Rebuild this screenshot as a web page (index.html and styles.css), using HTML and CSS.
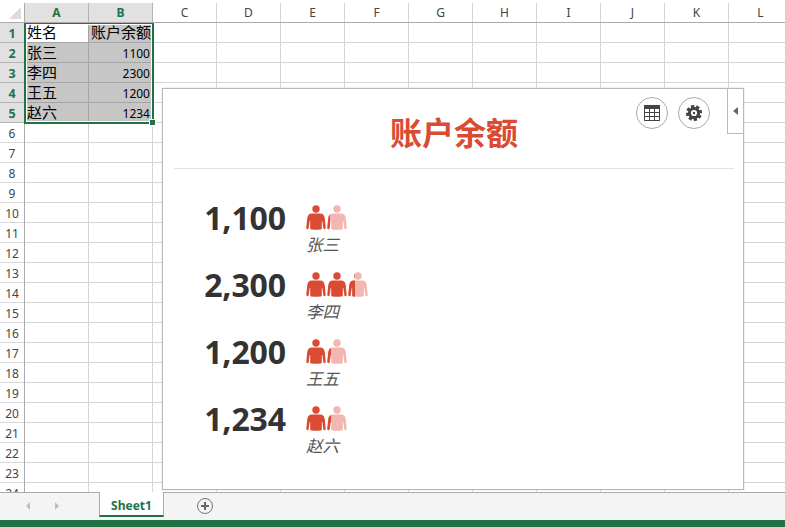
FILE: index.html
```
<!DOCTYPE html>
<html lang="zh-CN">
<head>
<meta charset="utf-8">
<title>Sheet1</title>
<link rel="stylesheet" href="styles.css">
</head>
<body>
<svg class="defs" width="0" height="0" aria-hidden="true">
  <symbol id="person" viewBox="0 0 20 25">
    <circle cx="10" cy="4" r="3.7"/>
    <path d="M6 8.600h8c3.200 0 4.300 1.700 4.800 4.800l.9 9.200c.1 1-.4 1.600-1.100 1.600s-1.200-.4-1.300-1.200l-1-6.900h-.5v7.100c0 .8-.5 1.200-1.500 1.300-2.800.4-5.800.4-8.600 0-1-.1-1.500-.5-1.500-1.300v-7.100h-.5l-1 6.900c-.1.8-.6 1.200-1.300 1.200s-1.200-.6-1.100-1.600l.9-9.200c.5-3.100 1.600-4.800 4.800-4.800z"/>
  </symbol>
</svg>
<div class="app">
  <header class="columns">
    <div class="corner"><svg width="12" height="12"><path d="M12 0v12H0z"/></svg></div>
    <div class="col on">A</div><div class="col on">B</div><div class="col">C</div><div class="col">D</div><div class="col">E</div><div class="col">F</div><div class="col">G</div><div class="col">H</div><div class="col">I</div><div class="col">J</div><div class="col">K</div><div class="col">L</div>
  </header>
  <main class="body">
    <div class="rows">
      <div class="row on">1</div><div class="row on">2</div><div class="row on">3</div><div class="row on">4</div><div class="row on">5</div><div class="row">6</div><div class="row">7</div><div class="row">8</div><div class="row">9</div><div class="row">10</div><div class="row">11</div><div class="row">12</div><div class="row">13</div><div class="row">14</div><div class="row">15</div><div class="row">16</div><div class="row">17</div><div class="row">18</div><div class="row">19</div><div class="row">20</div><div class="row">21</div><div class="row">22</div><div class="row">23</div><div class="row">24</div>
    </div>
    <div class="cells">
      <div class="data">
        <div class="cell active">姓名</div><div class="cell">账户余额</div>
        <div class="cell">张三</div><div class="cell num">1100</div>
        <div class="cell">李四</div><div class="cell num">2300</div>
        <div class="cell">王五</div><div class="cell num">1200</div>
        <div class="cell">赵六</div><div class="cell num">1234</div>
      </div>
      <div class="selection"><i class="handle"></i></div>
    </div>
    <section class="card">
      <h1 class="title">账户余额</h1>
      <div class="tools">
        <span class="tool"><svg width="16" height="16" viewBox="0 0 16 16"><path fill="#444" d="M0 0h16v16H0z"/><path fill="#fff" d="M1 4h4v3H1zM6 4h4v3H6zM11 4h4v3h-4zM1 8h4v3H1zM6 8h4v3H6zM11 8h4v3h-4zM1 12h4v3H1zM6 12h4v3H6zM11 12h4v3h-4z"/></svg></span>
        <span class="tool"><svg width="16" height="16" viewBox="-8 -8 16 16"><g fill="#444"><circle r="6"/><path d="M-1.700-8h3.400v16h-3.400z" transform="rotate(-12)"/><path d="M-1.700-8h3.400v16h-3.400z" transform="rotate(33)"/><path d="M-1.700-8h3.400v16h-3.400z" transform="rotate(78)"/><path d="M-1.700-8h3.400v16h-3.400z" transform="rotate(123)"/></g><circle r="3.100" fill="#fff"/><circle r="1.200" fill="#444"/></svg></span>
      </div>
      <div class="collapse"><svg width="5" height="8"><path d="M5 0v8L0 4z" fill="#666"/></svg></div>
      <div class="list">
        <div class="item"><div class="value">1,100</div><div class="info">
          <div class="people"><svg><use href="#person"/></svg><svg class="pale"><use href="#person"/></svg><span class="part p11"><svg><use href="#person"/></svg></span></div><div class="name">张三</div></div></div>
        <div class="item"><div class="value">2,300</div><div class="info">
          <div class="people"><svg><use href="#person"/></svg><svg><use href="#person"/></svg><svg class="pale"><use href="#person"/></svg><span class="part p23"><svg><use href="#person"/></svg></span></div><div class="name">李四</div></div></div>
        <div class="item"><div class="value">1,200</div><div class="info">
          <div class="people"><svg><use href="#person"/></svg><svg class="pale"><use href="#person"/></svg><span class="part p12"><svg><use href="#person"/></svg></span></div><div class="name">王五</div></div></div>
        <div class="item"><div class="value">1,234</div><div class="info">
          <div class="people"><svg><use href="#person"/></svg><svg class="pale"><use href="#person"/></svg><span class="part p12"><svg><use href="#person"/></svg></span></div><div class="name">赵六</div></div></div>
      </div>
    </section>
  </main>
  <nav class="tabs">
    <svg class="arrows" width="34" height="8"><path d="M4 0v8L0 4zM29 0v8l4-4z" fill="#bdbdbd"/></svg>
    <div class="tab">Sheet1</div>
    <svg class="add" width="18" height="18" viewBox="0 0 18 18"><circle cx="9" cy="9" r="7.500" fill="none" stroke="#777"/><path d="M9 5v8M5 9h8" stroke="#666" stroke-width="2"/></svg>
  </nav>
  <footer class="status"></footer>
</div>
</body>
</html>
```
FILE: styles.css
```
* { box-sizing: border-box; }
body { margin: 0; background: #fff; color: #444; font: 12px "Noto Sans", "Noto Sans CJK SC", sans-serif; }
.defs { position: absolute; }
.app { width: 785px; height: 527px; display: flex; flex-direction: column; overflow: hidden; }
.columns { height: 23px; flex: none; padding-top: 3px; display: flex; border-bottom: 1px solid #ababab; }
.corner { width: 25px; flex: none; border-right: 1px solid #ababab; display: flex; justify-content: flex-end; padding: 4px 3px 0 0; }
.corner svg { fill: #dcdcdc; }
.col { width: 64px; flex: none; border-right: 1px solid #d4d4d4; text-align: center; line-height: 19px; }
.col.on, .row.on { background: #e1e1e1; color: #217346; font-weight: 700; border-color: #b4b4b4; }
.body { position: relative; height: 469px; flex: none; overflow: hidden; display: flex; }
.rows { width: 25px; flex: none; border-right: 1px solid #ababab; }
.row { height: 20px; line-height: 22px; border-bottom: 1px solid #d9d9d9; text-align: center; }
.row.on { font-size: 12.5px; line-height: 21px; }
.cells {
  position: relative; flex: 1;
  background:
    repeating-linear-gradient(to right, transparent 0 63px, #d4d4d4 63px 64px),
    repeating-linear-gradient(to bottom, transparent 0 19px, #d4d4d4 19px 20px);
}
.data { width: 128px; display: grid; grid-template-columns: 64px 64px; grid-auto-rows: 20px; }
.cell { background: #c6c6c6; border-right: 1px solid #a5a5a5; border-bottom: 1px solid #a5a5a5; color: #000; font: 15px/18px "Noto Sans CJK SC", sans-serif; padding-left: 2px; white-space: nowrap; }
.cell.active { background: #fff; }
.cell.num { font: 12px/21px "Noto Sans", sans-serif; text-align: right; padding-right: 2px; }
.selection { position: absolute; left: -1px; top: -1px; width: 130px; height: 102px; border: 2px solid #217346; box-shadow: inset 0 0 0 1px #fff; }
.handle { position: absolute; right: -4px; bottom: -4px; width: 7px; height: 7px; background: #217346; border: 1px solid #fff; }
.card { position: absolute; left: 162px; top: 65px; width: 582px; height: 402px; background: #fff; border: 1px solid #b9b9b9; box-shadow: 0 0 1px #aaa; padding: 0 9px 0 11px; }
.title { margin: 0; height: 80px; border-bottom: 1px solid #e2e2df; color: #d94b33; text-align: center; font: bold 32px/84px "Noto Sans CJK SC", sans-serif; }
.tools { position: absolute; left: 473px; top: 8px; display: flex; gap: 10px; }
.tool { width: 32px; height: 32px; border: 1px solid #aaa; border-radius: 50%; display: flex; align-items: center; justify-content: center; }
.collapse { position: absolute; right: -1px; top: -1px; width: 17px; height: 46px; border: 1px solid #b9b9b9; display: flex; align-items: center; justify-content: center; }
.list { padding: 33px 0 0 30px; }
.item { height: 67px; display: flex; }
.value { width: 82px; color: #333; font-size: 32px; font-weight: 700; line-height: 32px; text-align: right; letter-spacing: -.1px; }
.info { padding: 3px 0 0 20px; }
.people { position: relative; display: flex; gap: 1.200px; height: 25px; }
.people svg { width: 20px; height: 25px; fill: #d94b33; flex: none; display: block; }
.people .pale { fill: #f1b7b0; }
.part { position: absolute; left: 21.200px; top: 0; height: 25px; overflow: hidden; }
.p11 { width: 3.200px; }
.p12 { width: 4px; }
.p23 { left: 42.400px; width: 6.500px; }
.name { color: #555; font: italic 16.5px/24px "Noto Sans CJK SC", sans-serif; padding-top: 2px; }
.tabs { height: 28px; flex: none; background: #f4f4f4; border-top: 1px solid #ababab; display: flex; align-items: flex-start; padding-left: 26px; }
.arrows { margin: 9px 39px 0 0; }
.tab { width: 65px; height: 25px; margin-top: -1px; background: #fff; border: 1px solid #ababab; border-top: 0; border-bottom: 2px solid #217346; color: #217346; font-weight: 700; line-height: 27px; text-align: center; }
.add { margin: 4px 0 0 32px; }
.status { flex: 1; background: #217346; }
```
